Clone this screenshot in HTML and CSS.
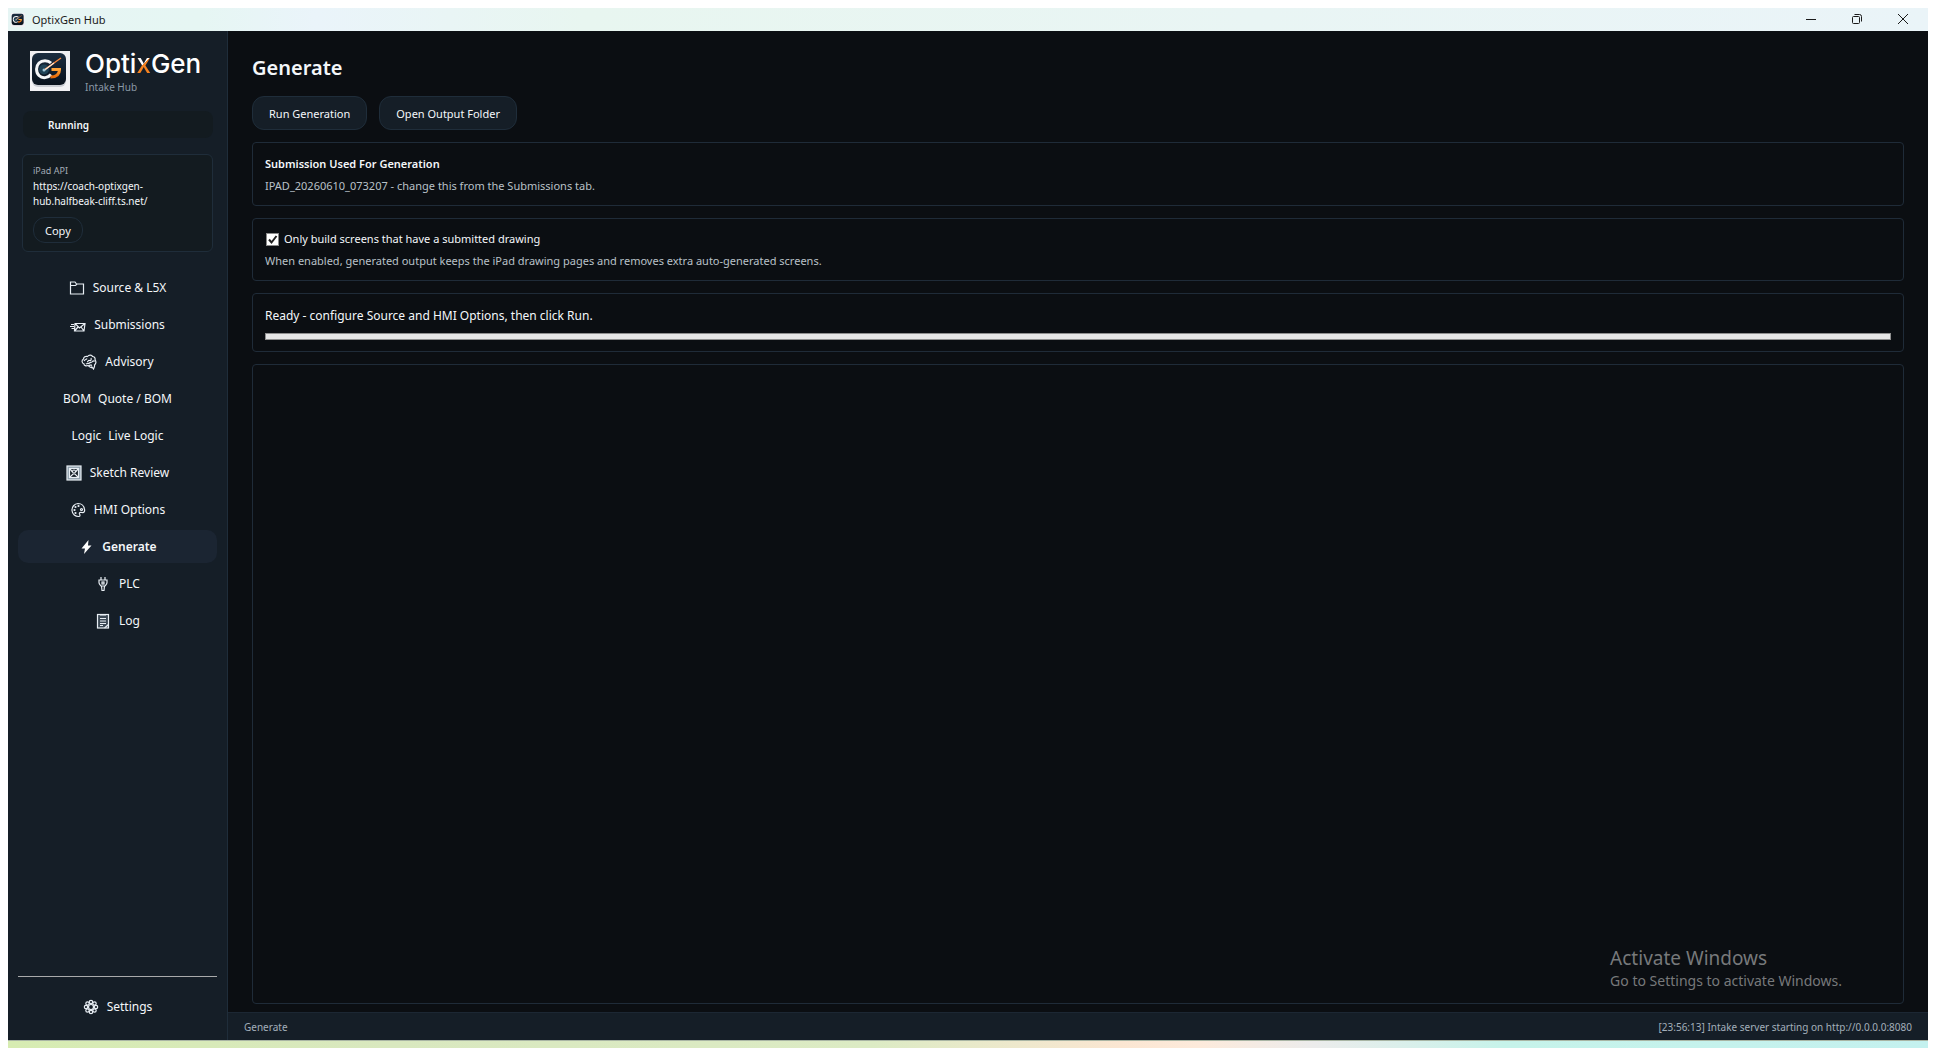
FILE: index.html
```
<!DOCTYPE html>
<html lang="en">
<head>
    <meta charset="UTF-8">
    <meta name="viewport" content="width=device-width, initial-scale=1.0">
    <title>OptixGen Hub</title>
    <link rel="stylesheet" href="styles.css">
</head>
<body>
    <!-- Logo artwork, shared by the title bar and the sidebar -->
    <svg class="defs" aria-hidden="true">
        <defs>
            <linearGradient id="tile" x1="0" y1="0" x2="0" y2="1">
                <stop offset="0" stop-color="#1b2d40"/>
                <stop offset="1" stop-color="#08111c"/>
            </linearGradient>
            <linearGradient id="amber" x1="0" y1="0" x2="0" y2="1">
                <stop offset="0" stop-color="#ffa53a"/>
                <stop offset="1" stop-color="#e86a08"/>
            </linearGradient>
        </defs>
        <symbol id="logo" viewBox="0 0 40 40">
            <rect width="40" height="40" fill="#f1f1f4"/>
            <rect x="2" y="4" width="34" height="32" rx="6" fill="#c9ccd3"/>
            <rect x="2" y="2" width="34" height="32" rx="6" fill="url(#tile)"/>
            <circle cx="14" cy="18.500" r="5" fill="#1e4256"/>
            <path d="M21 12C18 9 12 9 9 12S5.500 21 9 24.500s9 2.500 12-1" fill="none" stroke="#f4f6f8" stroke-width="3"/>
            <path d="M21.500 18.500H29.500c0 5-3 7.500-9 7.500" fill="none" stroke="url(#amber)" stroke-width="3"/>
            <path d="M14 19L31 7" fill="none" stroke="#ff8a3c" stroke-width="1.300"/>
            <path d="M14 19.500L24 12" fill="none" stroke="#ffe2cc" stroke-width="1.300"/>
            <circle cx="14" cy="19" r="1.500" fill="#9fc4d6"/>
        </symbol>
    </svg>

    <div class="window">
        <header class="titlebar">
            <svg class="titlebar-logo"><use href="#logo"/></svg>
            <span class="titlebar-text">OptixGen Hub</span>
            <div class="window-controls">
                <button type="button" aria-label="Minimize"><svg viewBox="0 0 12 12"><path d="M1 6.500h10"/></svg></button>
                <button type="button" aria-label="Restore"><svg viewBox="0 0 12 12"><rect x="1.500" y="3.500" width="7" height="7" rx="1"/><path d="M3.500 1.500h5a2 2 0 0 1 2 2v5"/></svg></button>
                <button type="button" aria-label="Close"><svg viewBox="0 0 12 12"><path d="M1 1l10 10M11 1L1 11"/></svg></button>
            </div>
        </header>

        <div class="app">
            <aside class="sidebar">
                <div class="brand">
                    <svg class="brand-logo"><use href="#logo"/></svg>
                    <div>
                        <div class="brand-name">Opti<span class="brand-x">x</span>Gen</div>
                        <div class="brand-sub">Intake Hub</div>
                    </div>
                </div>

                <div class="status-pill">Running</div>

                <section class="api-card">
                    <div class="api-label">iPad API</div>
                    <div class="api-url">https://coach-optixgen-hub.halfbeak-cliff.ts.net/</div>
                    <button type="button" class="btn btn-small">Copy</button>
                </section>

                <nav class="nav">
                    <button type="button" class="nav-item">
                        <svg class="icon" viewBox="0 0 16 16"><path d="M1.500 14V2h4.500l1.500 2h7v10zM1.500 5.500h5L8 4"/></svg>
                        <span>Source &amp; L5X</span>
                    </button>
                    <button type="button" class="nav-item">
                        <svg class="icon" viewBox="0 0 16 16"><path d="M5 6.500h10l-1 7.500H4.500zM5 6.500l4.500 4.500L15 6.500M4.500 14l3.500-4M14 14l-3-4M1 7.500h3M0 9.500h4M1.500 11.500H4"/></svg>
                        <span>Submissions</span>
                    </button>
                    <button type="button" class="nav-item">
                        <svg class="icon" viewBox="0 0 16 16"><path d="M11 13.500c-2 .5-3-1-4-2-2 .8-4 .2-4-1.500C.500 9 .500 6 2.500 5c0-2 2-3 4-2.500C8 .500 11 1 11.500 2.500c2 0 3 2 2.500 3.500 1.500 1.500 1 4-.5 5 .5 1.500-.5 2.500-1 4L11 13zM3 7c1-2 2.500-1 3-2.500M6 8c1 0 1-2 2.500-1.500s2-1 1.500-2.500M5 10c1-1 2.500 0 3.500-1s2 0 3-1.500 1.500 0 2 0M8 11.500c1-1 2 0 3-.5"/></svg>
                        <span>Advisory</span>
                    </button>
                    <button type="button" class="nav-item nav-text">
                        <span>BOM</span>
                        <span>Quote / BOM</span>
                    </button>
                    <button type="button" class="nav-item nav-text">
                        <span>Logic</span>
                        <span>Live Logic</span>
                    </button>
                    <button type="button" class="nav-item">
                        <svg class="icon" viewBox="0 0 16 16"><rect x="1" y="1" width="14" height="14" fill="#8fa0ad"/><rect x="3.500" y="3.500" width="9" height="9" fill="#151e27"/><path d="M4 4l2.500 3M12 4L9.500 7M4 12l3-3h2l3 3"/><circle cx="8" cy="6.500" r="1.500"/></svg>
                        <span>Sketch Review</span>
                    </button>
                    <button type="button" class="nav-item">
                        <svg class="icon" viewBox="0 0 16 16"><path d="M8 1.500a6.500 6.500 0 1 0 1 13c1.500-.3 1-1.800.5-2.500-.5-1.500 1-2 2.500-1.500 2 .5 3-1 2.500-3C14 4 11.500 1.500 8 1.500z"/><circle cx="4.500" cy="8" r=".5"/><circle cx="5.500" cy="5" r=".5"/><circle cx="8.500" cy="4" r=".5"/><circle cx="5.500" cy="11" r=".5"/><circle cx="11.500" cy="7.500" r="1"/></svg>
                        <span>HMI Options</span>
                    </button>
                    <button type="button" class="nav-item active">
                        <svg class="icon" viewBox="0 0 16 16"><path class="solid" d="M10.500 1L3.500 9.500h3.500L6 15l7.500-8.500H10z"/></svg>
                        <span>Generate</span>
                    </button>
                    <button type="button" class="nav-item">
                        <svg class="icon" viewBox="0 0 16 16"><path d="M6 1v3M10 1v3M4 4h8v2.500c0 2-1.500 2.500-2 3.500H6c-.5-1-2-1.500-2-3.500zM6.500 10l.5 4.500h2l.5-4.500"/><rect x="7" y="6" width="2" height="2"/></svg>
                        <span>PLC</span>
                    </button>
                    <button type="button" class="nav-item">
                        <svg class="icon" viewBox="0 0 16 16"><rect x="2.500" y="1.500" width="11" height="13.500" fill="#3b4854"/><path d="M5 2h6M5 5.500h6M5 8h6M5 10.500h6M5 12.500h3M9.500 15l4-3.500"/></svg>
                        <span>Log</span>
                    </button>
                </nav>

                <div class="sidebar-footer">
                    <button type="button" class="nav-item">
                        <svg class="icon" viewBox="0 0 16 16"><circle cx="8" cy="8" r="2.500"/><circle cx="8" cy="3" r="1.700"/><circle cx="8" cy="13" r="1.700"/><circle cx="3" cy="8" r="1.700"/><circle cx="13" cy="8" r="1.700"/><circle cx="4.500" cy="4.500" r="1.700"/><circle cx="11.500" cy="4.500" r="1.700"/><circle cx="4.500" cy="11.500" r="1.700"/><circle cx="11.500" cy="11.500" r="1.700"/></svg>
                        <span>Settings</span>
                    </button>
                </div>
            </aside>

            <div class="content">
                <main class="page">
                    <h1>Generate</h1>
                    <div class="toolbar">
                        <button type="button" class="btn">Run Generation</button>
                        <button type="button" class="btn">Open Output Folder</button>
                    </div>

                    <section class="card">
                        <h2>Submission Used For Generation</h2>
                        <p class="muted">IPAD_20260610_073207 - change this from the Submissions tab.</p>
                    </section>

                    <section class="card">
                        <div class="check-row">
                            <input type="checkbox" id="onlyDrawn" checked>
                            <label for="onlyDrawn">Only build screens that have a submitted drawing</label>
                        </div>
                        <p class="muted">When enabled, generated output keeps the iPad drawing pages and removes extra auto-generated screens.</p>
                    </section>

                    <section class="card">
                        <label class="ready" for="progress">Ready - configure Source and HMI Options, then click Run.</label>
                        <progress id="progress" value="0" max="100"></progress>
                    </section>

                    <section class="card output"></section>
                </main>

                <footer class="statusbar">
                    <span>Generate</span>
                    <span>[23:56:13] Intake server starting on http://0.0.0.0:8080</span>
                </footer>
            </div>
        </div>

        <div class="watermark">
            <div class="watermark-title">Activate Windows</div>
            <div class="watermark-text">Go to Settings to activate Windows.</div>
        </div>
    </div>
    <div class="desktop-strip"></div>
</body>
</html>
```

FILE: styles.css
```
* {
    box-sizing: border-box;
}

body {
    display: flex;
    flex-direction: column;
    height: 100vh;
    margin: 0;
    padding: 8px 8px 0;
    overflow: hidden;
    background-color: #fff;
    font-family: "Noto Sans", "Open Sans", sans-serif;
    font-size: 11px;
    line-height: 16px;
    color: #f4f7fa;
}

h1, h2, p {
    margin: 0;
}

button {
    font: inherit;
    color: inherit;
    cursor: pointer;
}

.defs {
    position: absolute;
    width: 0;
    height: 0;
}

.window {
    position: relative;
    flex: 1;
    display: flex;
    flex-direction: column;
    min-height: 0;
}

/* Title bar */
.titlebar {
    display: flex;
    align-items: center;
    height: 23px;
    padding-left: 3px;
    background: linear-gradient(90deg, #e6f5f4, #e6f6f3 10%, #eaf4fa 16%, #e8f6f0 30%, #eaf4f8);
    color: #1a1a1a;
}

.titlebar-logo {
    width: 14px;
    height: 14px;
}

.titlebar-text {
    margin-left: 7px;
}

.window-controls {
    display: flex;
    margin-left: auto;
    padding: 0 2px 2px 0;
}

.window-controls button {
    display: flex;
    align-items: center;
    justify-content: center;
    width: 46px;
    height: 20px;
    padding: 0;
    border: none;
    background: none;
}

.window-controls svg {
    width: 12px;
    height: 12px;
    fill: none;
    stroke: #1a1a1a;
}

.app {
    flex: 1;
    display: flex;
    min-height: 0;
}

/* Sidebar */
.sidebar {
    display: flex;
    flex-direction: column;
    width: 220px;
    padding: 20px 10px 17px;
    border-right: 1px solid #1f2d3a;
    background-color: #151e27;
}

.brand {
    display: flex;
    gap: 15px;
    padding-left: 12px;
}

.brand-logo {
    width: 40px;
    height: 40px;
}

.brand-name {
    font-family: Inter, "Noto Sans", sans-serif;
    font-size: 26px;
    font-weight: 500;
    line-height: 26px;
    color: #fff;
}

.brand-x {
    background: linear-gradient(135deg, #fff 50%, #f58220 50%);
    background-clip: text;
    color: transparent;
}

.brand-sub {
    margin-top: 2px;
    font-size: 10px;
    color: #8b99a6;
}

.status-pill {
    margin: 16px 4px 0 5px;
    padding: 6px 25px 5px;
    border-radius: 8px;
    background-color: #131b20;
    font-size: 10px;
    font-weight: 600;
}

.api-card {
    margin: 16px 4px 0;
    padding: 8px 10px;
    border: 1px solid #1f2d3a;
    border-radius: 6px;
    background-color: #131b20;
}

.api-label {
    font-size: 9px;
    color: #a3adb7;
}

.api-url {
    width: 130px;
    font-size: 10px;
    line-height: 15px;
}

.btn {
    height: 34px;
    padding: 1px 16px 0;
    border: 1px solid #1f2d3a;
    border-radius: 12px;
    background-color: #151e27;
}

.btn-small {
    height: 26px;
    margin-top: 8px;
    padding: 1px 11px 0;
    background-color: #131b20;
}

.nav {
    display: flex;
    flex-direction: column;
    gap: 4px;
    margin-top: 19px;
}

.nav-item {
    display: flex;
    align-items: center;
    justify-content: center;
    gap: 8px;
    width: 100%;
    height: 33px;
    padding: 0;
    border: none;
    border-radius: 10px;
    background: none;
    font-size: 12px;
}

.nav-item.nav-text {
    gap: 7px;
}

.nav-item.active {
    background-color: #1b2532;
    font-weight: 600;
}

.icon {
    width: 16px;
    height: 16px;
    fill: none;
    stroke: #e8eef4;
    stroke-width: 1.2;
}

.icon .solid {
    fill: #fff;
    stroke: none;
}

.sidebar-footer {
    margin-top: auto;
    padding-top: 13px;
    border-top: 1px solid #a9aaab;
}

/* Main area */
.content {
    flex: 1;
    display: flex;
    flex-direction: column;
    min-width: 0;
    background-color: #0b0e12;
}

.page {
    flex: 1;
    display: flex;
    flex-direction: column;
    gap: 12px;
    padding: 20px 24px 8px;
}

h1 {
    font-size: 20px;
    font-weight: 600;
    line-height: 33px;
}

.toolbar {
    display: flex;
    gap: 12px;
}

.card {
    padding: 12px 12px 11px;
    border: 1px solid #1f2b38;
    border-radius: 4px;
}

h2 {
    font-size: 11px;
    font-weight: 600;
    line-height: 18px;
}

.muted {
    margin-top: 5px;
    color: #b9c1c8;
}

.check-row {
    display: flex;
    align-items: center;
    gap: 5px;
    height: 16px;
    margin-bottom: 6px;
}

.check-row input {
    appearance: none;
    width: 13px;
    height: 13px;
    margin: 0 0 0 1px;
    border: 1px solid #8a8a8a;
    background: #fff url("data:image/svg+xml,%3Csvg xmlns='http://www.w3.org/2000/svg' viewBox='0 0 11 11'%3E%3Cpath d='M2 5.500l2.500 3L9.500 2' fill='none' stroke='%23212121' stroke-width='2'/%3E%3C/svg%3E");
}

.ready {
    display: block;
    font-size: 12px;
    line-height: 19px;
}

progress {
    appearance: none;
    display: block;
    width: 100%;
    height: 7px;
    margin-top: 8px;
    border: 1px solid #8f8f8f;
}

progress::-webkit-progress-bar {
    background-color: #e6e6e6;
}

.output {
    flex: 1;
}

.statusbar {
    display: flex;
    align-items: center;
    justify-content: space-between;
    height: 28px;
    padding: 0 16px;
    border-top: 1px solid #1c2733;
    background-color: #151e27;
    font-size: 10px;
    color: #a3afba;
}

.watermark {
    position: absolute;
    right: 86px;
    bottom: 49px;
    color: #77797b;
}

.watermark-title {
    font-size: 19px;
    line-height: 26px;
}

.watermark-text {
    font-size: 14px;
    line-height: 20px;
}

.desktop-strip {
    height: 8px;
    border-top: 1px solid #a9b5a4;
    background: linear-gradient(90deg, #d7ecb2, #d9e8bf 20%, #dcebc4 45%, #fbe6d2 58%, #fdeadb 62%, #ececec 68%, #c6f3ea 78%, #c4f1ef);
}
```
